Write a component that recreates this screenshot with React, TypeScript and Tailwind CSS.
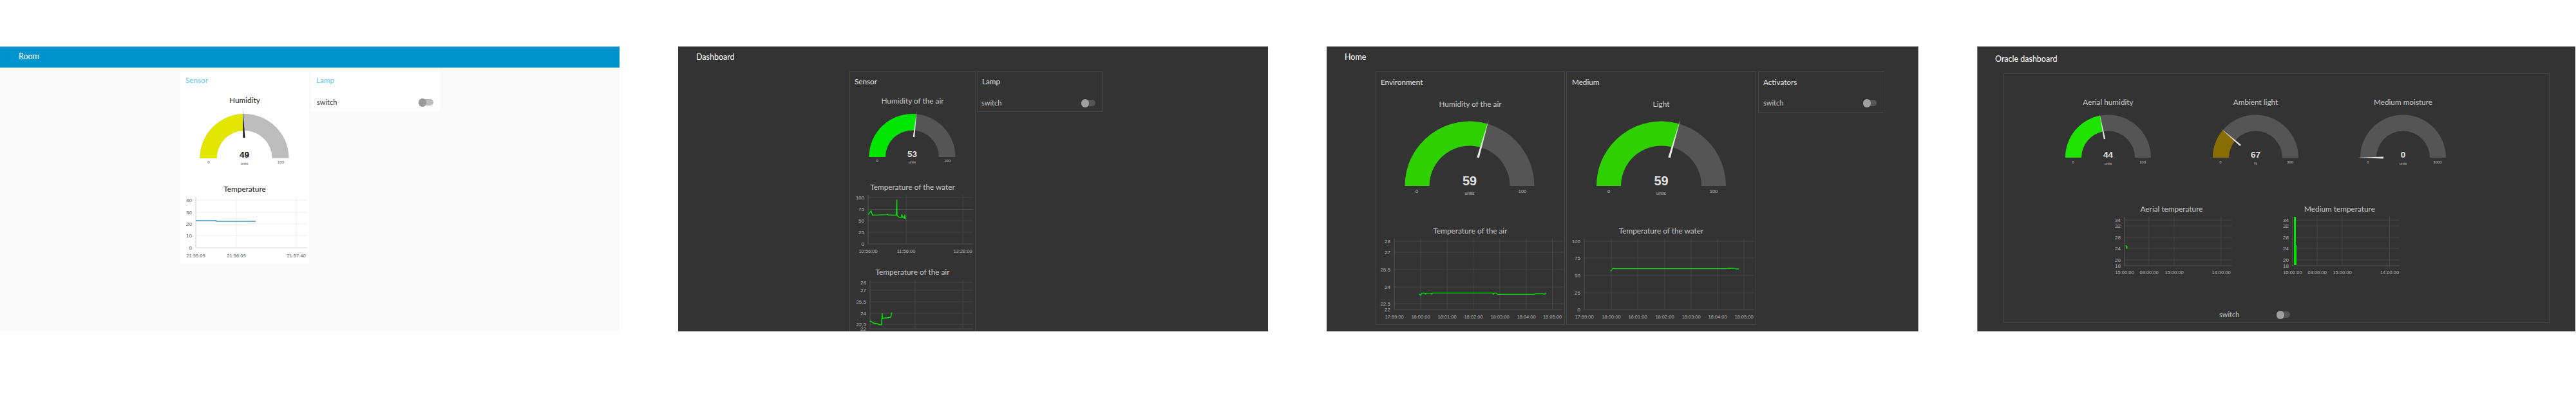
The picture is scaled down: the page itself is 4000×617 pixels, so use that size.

import React from "react";

type GaugeP = {
  x0: number; y0: number; w: number; h: number; cx: number; cy: number; ro: number; ri: number;
  frac: number; color: string; dark?: boolean; needle: [number, number, number, number]; nw: number;
  value: string; vy: number; vs: number; unit: string; uy: number; us: number;
  minX: number; maxX: number; labY: number; labS: number; max: string;
};

function Gauge(p: GaugeP) {
  const a = Math.PI * (1 - p.frac);
  const px = (r: number) => p.cx + r * Math.cos(a);
  const py = (r: number) => p.cy - r * Math.sin(a);
  const bg = p.dark ? "#555555" : "#bdbdbd";
  const fg = p.dark ? "#e0e0e0" : "#111111";
  const lab = p.dark ? "#c0c0c0" : "#444444";
  const [tx, ty, bx, by] = p.needle;
  const dx = bx - tx, dy = by - ty, l = Math.hypot(dx, dy);
  const nx = (-dy / l) * p.nw / 2, ny = (dx / l) * p.nw / 2;
  const arc = (x1: number, y1: number, x2: number, y2: number) =>
    `M${p.cx - p.ro} ${p.cy}A${p.ro} ${p.ro} 0 0 1 ${x1} ${y1}L${x2} ${y2}A${p.ri} ${p.ri} 0 0 0 ${p.cx - p.ri} ${p.cy}Z`;
  return (
    <svg width={p.w} height={p.h} viewBox={`${p.x0} ${p.y0} ${p.w} ${p.h}`} className="block overflow-visible font-['Liberation_Sans',sans-serif]">
      <path d={`M${p.cx - p.ro} ${p.cy}A${p.ro} ${p.ro} 0 0 1 ${p.cx + p.ro} ${p.cy}L${p.cx + p.ri} ${p.cy}A${p.ri} ${p.ri} 0 0 0 ${p.cx - p.ri} ${p.cy}Z`} fill={bg} />
      {p.frac > 0 && <path d={arc(px(p.ro), py(p.ro), px(p.ri), py(p.ri))} fill={p.color} />}
      <polygon points={`${tx},${ty} ${bx + nx},${by + ny} ${bx - nx},${by - ny}`} fill={p.dark ? "#e8e8e8" : "#111111"} />
      <text x={p.cx} y={p.vy} textAnchor="middle" dominantBaseline="central" fontSize={p.vs} fontWeight="700" fill={fg}>{p.value}</text>
      <text x={p.cx} y={p.uy} textAnchor="middle" dominantBaseline="central" fontSize={p.us} fill={lab}>{p.unit}</text>
      <text x={p.minX} y={p.labY} textAnchor="middle" dominantBaseline="central" fontSize={p.labS} fill={lab}>0</text>
      <text x={p.maxX} y={p.labY} textAnchor="middle" dominantBaseline="central" fontSize={p.labS} fill={lab}>{p.max}</text>
    </svg>
  );
}

type ChartP = {
  x0: number; y0: number; w: number; h: number; left: number; right: number; top: number;
  ys: [number, string][]; xs: [number, string][]; labelY: number; dark?: boolean;
  lines?: { d: string; color: string; sw: number }[];
};

function Chart(p: ChartP) {
  const grid = p.dark ? "#474747" : "#eeeeee";
  const axis = p.dark ? "#4e4e4e" : "#d8d8d8";
  const txt = p.dark ? "#b4b4b4" : "#555555";
  const bottom = p.ys[p.ys.length - 1][0];
  return (
    <svg width={p.w} height={p.h} viewBox={`${p.x0} ${p.y0} ${p.w} ${p.h}`} className="block overflow-visible font-['Liberation_Sans',sans-serif]">
      {p.ys.map(([y, t]) => (
        <g key={t + y}>
          <line x1={p.left} x2={p.right} y1={y} y2={y} stroke={t === p.ys[p.ys.length - 1][1] ? axis : grid} strokeWidth={1} />
          <text x={p.left - 6} y={y} textAnchor="end" dominantBaseline="central" fontSize={8} fill={txt}>{t}</text>
        </g>
      ))}
      {p.xs.map(([x, t]) => (
        <g key={t + x}>
          <line x1={x} x2={x} y1={p.top} y2={bottom} stroke={grid} strokeWidth={1} />
          <text x={x} y={p.labelY} textAnchor="middle" dominantBaseline="central" fontSize={7.5} fill={txt}>{t}</text>
        </g>
      ))}
      <line x1={p.left} x2={p.left} y1={p.top} y2={bottom} stroke={axis} strokeWidth={1} />
      {p.lines?.map((l, i) => <path key={i} d={l.d} fill="none" stroke={l.color} strokeWidth={l.sw} strokeLinejoin="round" />)}
    </svg>
  );
}

function conv(pts: number[][], ox: number, oy: number, sx: number, sy: number) {
  return "M" + pts.map(([x, y]) => `${(ox + x / sx).toFixed(1)} ${(oy + y / sy).toFixed(1)}`).join("L");
}

function Toggle({ dark, track }: { dark?: boolean; track: string }) {
  return (
    <div className={`${track} h-[10px] rounded-full flex items-center ${dark ? "bg-[#555555]" : "bg-[#bdbdbd]"}`}>
      <div className={`w-[12px] h-[13px] rounded-full shrink-0 ${dark ? "bg-[#a0a0a0]" : "bg-[#999999]"}`} />
    </div>
  );
}

const dt = "h-[20px] leading-[20px] text-center text-[11.8px] text-[#c8c8c8]";
const dl = "h-[30px] pl-[7px] text-[11.7px] text-[#e4e4e4]";
const dcard = "border border-[#454545] shrink-0";
const sw = "text-[11px] text-[#c4c4c4]";

const waterPts = [[115,160],[128,143],[134,163],[200,161],[204,158],[206,162],[245,163],[248,92],[249,165],[258,173],[268,175],[271,160],[276,175],[281,170],[283,178],[285,162],[288,182]];
const airPts = [[122,657],[130,660],[140,667],[160,670],[165,674],[176,674],[180,622],[181,645],[195,642],[200,643],[215,640],[220,638],[222,625],[225,617]];
const air3 = [[192,350],[198,357],[204,347],[214,346],[218,352],[222,347],[240,347],[243,352],[247,346],[490,346],[494,353],[498,346],[506,346],[510,352],[660,352],[666,350],[695,350],[702,352],[708,346]];
const water3 = [[968,244],[973,240],[978,231],[988,233],[1440,233],[1445,231],[1470,231],[1478,234],[1490,234]];

const air3Ys: [number, string][] = [[375,"28"],[392,"27"],[419,"25.5"],[446,"24"],[472,"22.5"],[481,"22"]];
const orcYs: [number, string][] = [[342,"34"],[351,"32"],[369,"28"],[386,"24"],[404,"20"],[413,"18"]];

export default function App() {
  return (
    <div className="flex w-[4000px] h-[617px] bg-white pt-[72px] items-start font-['Lato',sans-serif] overflow-hidden">
      {/* Room */}
      <div className="w-[962px] h-[443px] bg-[#fafafa] shrink-0 overflow-hidden">
        <div className="h-[33px] bg-[#0094ce] border-t border-[#6cbde0] pl-[29px] text-[12.5px] leading-[30px] text-white">Room</div>
        <div className="flex items-start pl-[280px] pt-[4px] gap-[3px]">
          <div className="w-[200px] h-[302px] bg-white border border-white">
            <div className="h-[30px] pl-[7px] text-[11.7px] leading-[28px] text-[#5cc8f0]">Sensor</div>
            <div className="mt-[6px] h-[20px] leading-[20px] text-center text-[11.8px] text-[#222222]">Humidity</div>
            <Gauge x0={281} y0={166} w={198} h={96} cx={379.5} cy={246} ro={69} ri={43} frac={0.49} color="#e2e600" needle={[377,171,379,214]} nw={3} value="49" vy={240} vs={13.5} unit="units" uy={254} us={5.5} minX={324} maxX={436} labY={252} labS={6} max="100" />
            <div className="mt-[22px] h-[20px] leading-[20px] text-center text-[11.8px] text-[#222222]">Temperature</div>
            <Chart x0={281} y0={304} w={198} h={102} left={304} right={477} top={306} labelY={397}
              ys={[[311,"40"],[330,"30"],[348,"20"],[366,"10"],[385,"0"]]} xs={[[304,"21:55:09"],[367,"21:56:09"],[460,"21:57:40"]]}
              lines={[{ d: "M304 343L336 343L336 344L397 344", color: "#4a92c4", sw: 1.6 }]} />
          </div>
          <div className="w-[200px] h-[64px] bg-white border border-white">
            <div className="h-[30px] pl-[7px] text-[11.7px] leading-[28px] text-[#5cc8f0]">Lamp</div>
            <div className="mt-[9px] h-[20px] pl-[8px] pr-[9px] flex items-center justify-between">
              <span className="text-[11px] text-[#333333]">switch</span>
              <Toggle track="w-[23px]" />
            </div>
          </div>
        </div>
      </div>

      {/* Dashboard */}
      <div className="ml-[91px] w-[916px] h-[443px] bg-[#333333] shrink-0 overflow-hidden border-t border-[#777777]">
        <div className="h-[38px] pl-[28px] text-[12.5px] leading-[32px] text-white">Dashboard</div>
        <div className="flex items-start pl-[266px] gap-[2px]">
          <div className={`${dcard} w-[196px] h-[410px]`}>
            <div className={`${dl} leading-[28px]`}>Sensor</div>
            <div className={`${dt} mt-[5px]`}>Humidity of the air</div>
            <Gauge dark x0={1320} y0={167} w={194} h={100} cx={1416.5} cy={244} ro={67} ri={41.5} frac={0.53} color="#00e600" needle={[1423.5,172,1419,213]} nw={2.5} value="53" vy={239} vs={13.5} unit="units" uy={252} us={5.5} minX={1362} maxX={1471} labY={250} labS={6} max="100" />
            <div className={`${dt} mt-[14px]`}>Temperature of the water</div>
            <Chart dark x0={1320} y0={301} w={194} h={97} left={1348} right={1511} top={303} labelY={390}
              ys={[[307,"100"],[325.5,"75"],[343,"50"],[361,"25"],[379,"0"]]} xs={[[1348,"10:56:00"],[1407,"11:56:00"],[1495,"13:28:00"]]}
              lines={[{ d: conv(waterPts, 1310, 280, 3, 3), color: "#00e600", sw: 1.3 }]} />
            <div className={`${dt} mt-[15px]`}>Temperature of the air</div>
            <Chart dark x0={1320} y0={433} w={194} h={85} left={1351} right={1511} top={435} labelY={522}
              ys={[[439,"28"],[451,"27"],[469,"25,5"],[487,"24"],[504,"22,5"],[511,"22"]]} xs={[[1421,""],[1495,""]]}
              lines={[{ d: conv(airPts, 1310, 280, 3, 3), color: "#00e600", sw: 1.5 }]} />
          </div>
          <div className={`${dcard} w-[195px] h-[63px]`}>
            <div className={`${dl} leading-[28px]`}>Lamp</div>
            <div className="mt-[8px] h-[20px] pl-[6px] pr-[10px] flex items-center justify-between">
              <span className={sw}>switch</span>
              <Toggle dark track="w-[22px]" />
            </div>
          </div>
        </div>
      </div>

      {/* Home */}
      <div className="ml-[91px] w-[919px] h-[443px] bg-[#333333] shrink-0 overflow-hidden border-t border-r border-[#777777]">
        <div className="h-[38px] pl-[28px] text-[12.5px] leading-[32px] text-white">Home</div>
        <div className="flex items-start pl-[76px] gap-[2px]">
          <div className={`${dcard} w-[294px] h-[394px]`}>
            <div className={`${dl} leading-[30px]`}>Environment</div>
            <div className={`${dt} mt-[10px]`}>Humidity of the air</div>
            <Gauge dark x0={2137} y0={172} w={292} h={140} cx={2282} cy={289} ro={100.5} ri={62.5} frac={0.59} color="#2ed000" needle={[2312,185,2295,245]} nw={3.5} value="59" vy={281} vs={20} unit="units" uy={300} us={7} minX={2200} maxX={2364} labY={297} labS={7.5} max="100" />
            <div className={`${dt} mt-[37px]`}>Temperature of the air</div>
            <Chart dark x0={2137} y0={369} w={292} h={130} left={2165} right={2427} top={371} labelY={492}
              ys={air3Ys} xs={[[2165,"17:59:00"],[2206,"18:00:00"],[2247,"18:01:00"],[2288,"18:02:00"],[2329,"18:03:00"],[2370,"18:04:00"],[2410.5,"18:05:00"]]}
              lines={[{ d: conv(air3, 2130, 340, 2.613, 3), color: "#00e600", sw: 1.3 }]} />
          </div>
          <div className={`${dcard} w-[295px] h-[394px]`}>
            <div className={`${dl} pl-[8px] leading-[30px]`}>Medium</div>
            <div className={`${dt} mt-[10px]`}>Light</div>
            <Gauge dark x0={2433} y0={172} w={293} h={140} cx={2579.5} cy={289} ro={100.5} ri={62.5} frac={0.59} color="#2ed000" needle={[2609.5,185,2592,245]} nw={3.5} value="59" vy={281} vs={20} unit="units" uy={300} us={7} minX={2498} maxX={2661} labY={297} labS={7.5} max="100" />
            <div className={`${dt} mt-[37px]`}>Temperature of the water</div>
            <Chart dark x0={2433} y0={369} w={293} h={130} left={2460} right={2724} top={371} labelY={492}
              ys={[[375,"100"],[401,"75"],[428,"50"],[455,"25"],[481,"0"]]} xs={[[2460,"17:59:00"],[2502,"18:00:00"],[2543,"18:01:00"],[2585,"18:02:00"],[2626,"18:03:00"],[2667,"18:04:00"],[2708,"18:05:00"]]}
              lines={[{ d: conv(water3, 2130, 340, 2.613, 3), color: "#00e600", sw: 1.3 }]} />
          </div>
          <div className={`${dcard} ml-[1px] w-[196px] h-[64px]`}>
            <div className={`${dl} leading-[30px]`}>Activators</div>
            <div className="mt-[8px] h-[20px] pl-[7px] pr-[11px] flex items-center justify-between">
              <span className={sw}>switch</span>
              <Toggle dark track="w-[21px]" />
            </div>
          </div>
        </div>
      </div>

      {/* Oracle */}
      <div className="ml-[91px] w-[929px] h-[443px] bg-[#333333] shrink-0 overflow-hidden border-t border-l border-[#777777]">
        <div className="h-[41px] pl-[27px] text-[12.5px] leading-[38px] text-white">Oracle dashboard</div>
        <div className="pl-[40px]">
          <div className="border border-[#454545] w-[848px] h-[388px]">
            <div className="mt-[34px] pl-[47px] flex">
              <div className="w-[229px]">
                <div className={dt}>Aerial humidity</div>
                <Gauge dark x0={3159} y0={169} w={229} h={92} cx={3273.5} cy={245} ro={66.5} ri={41.5} frac={0.44} color="#1ee400" needle={[3260,176,3268,216]} nw={2.5} value="44" vy={240} vs={13.5} unit="units" uy={254} us={5.5} minX={3219} maxX={3327} labY={252} labS={6} max="100" />
              </div>
              <div className="w-[229px]">
                <div className={dt}>Ambient light</div>
                <Gauge dark x0={3388} y0={169} w={229} h={92} cx={3502.5} cy={245} ro={66.5} ri={41.5} frac={0.223} color="#8a6d00" needle={[3449,200,3479,226]} nw={2.5} value="67" vy={240} vs={13.5} unit="%" uy={254} us={5.5} minX={3448} maxX={3556} labY={252} labS={6} max="300" />
              </div>
              <div className="w-[229px]">
                <div className={dt}>Medium moisture</div>
                <Gauge dark x0={3617} y0={169} w={229} h={92} cx={3731.5} cy={245} ro={66.5} ri={41.5} frac={0} color="#555555" needle={[3660,245,3701,245]} nw={3} value="0" vy={240} vs={13.5} unit="units" uy={254} us={5.5} minX={3677} maxX={3785} labY={252} labS={6} max="3000" />
              </div>
            </div>
            <div className="mt-[54px] pl-[160px] flex gap-[61px]">
              <div className="w-[200px]">
                <div className={dt}>Aerial temperature</div>
                <Chart dark x0={3272} y0={335} w={200} h={95} left={3299} right={3465} top={337} labelY={423} ys={orcYs}
                  xs={[[3299,"15:00:00"],[3337,"03:00:00"],[3376,"15:00:00"],[3449,"14:00:00"]]}
                  lines={[{ d: "M3301 381L3302 384L3302.5 386L3303 383", color: "#00e600", sw: 1.6 }]} />
              </div>
              <div className="w-[200px]">
                <div className={dt}>Medium temperature</div>
                <Chart dark x0={3533} y0={335} w={200} h={95} left={3560} right={3726} top={337} labelY={423} ys={orcYs}
                  xs={[[3560,"15:00:00"],[3598,"03:00:00"],[3637,"15:00:00"],[3710.5,"14:00:00"]]}
                  lines={[{ d: "M3563.5 337L3563.5 382", color: "#00e600", sw: 3 }, { d: "M3564 381L3564 412", color: "#00e600", sw: 4 }]} />
              </div>
            </div>
            <div className="mt-[49px] pl-[334px] h-[20px] flex items-center">
              <span className={`${sw} w-[89px]`}>switch</span>
              <Toggle dark track="w-[21px]" />
            </div>
          </div>
        </div>
      </div>
    </div>
  );
}
